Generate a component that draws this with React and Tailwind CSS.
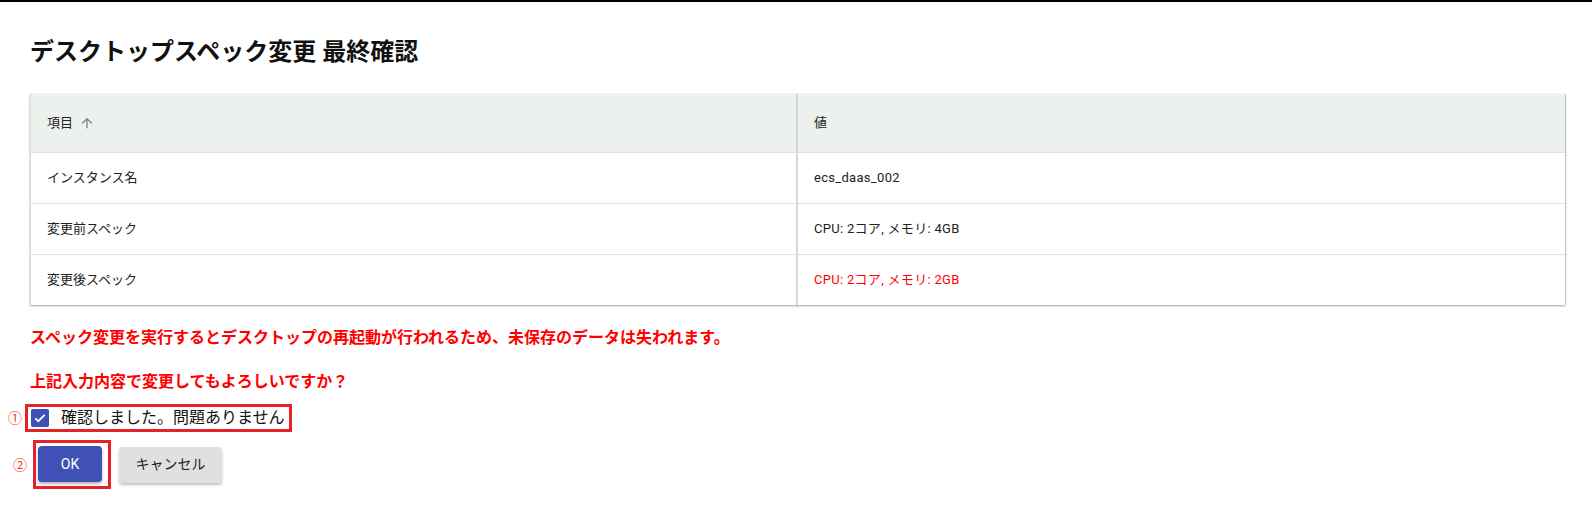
import React from "react";

const font = { fontFamily: 'Roboto, "Noto Sans CJK JP", sans-serif' };

function ArrowUp() {
  return (
    <svg width="16" height="16" viewBox="0 0 24 24" className="ml-[6px]">
      <path d="M4 12l1.41 1.41L11 7.83V20h2V7.83l5.58 5.59L20 12l-8-8-8 8z" fill="#858585" />
    </svg>
  );
}

export default function App() {
  const rows = [
    { k: "インスタンス名", v: "ecs_daas_002", red: false },
    { k: "変更前スペック", v: "CPU: 2コア, メモリ: 4GB", red: false },
    { k: "変更後スペック", v: "CPU: 2コア, メモリ: 2GB", red: true },
  ];
  return (
    <div className="w-[1592px] h-[507px] bg-white border-t-2 border-black overflow-hidden" style={font}>
      <div className="pl-[30px] pr-[27px]">
        <h1 className="mt-[34px] text-[24px] leading-[32px] font-bold text-[#111]">
          デスクトップスペック変更 最終確認
        </h1>
        <div className="mt-[26px] bg-white border-l border-[#d8dcd9] shadow-[0_1px_2px_rgba(0,0,0,0.35),1px_0_1px_rgba(0,0,0,0.15)]">
          <div className="grid grid-cols-[767px_1fr] h-[58px] bg-[#edf1ee] text-[13px] text-[#222]">
            <div className="flex items-center pl-[16px] border-r-2 border-[#d2d8d4]">
              項目
              <ArrowUp />
            </div>
            <div className="flex items-center pl-[16px]">値</div>
          </div>
          {rows.map((r) => (
            <div key={r.k} className="grid grid-cols-[767px_1fr] h-[51px] border-t border-[#e0e0e0] text-[13px] text-[#222]">
              <div className="flex items-center pl-[16px] border-r-2 border-[#d2d8d4]">{r.k}</div>
              <div className={"flex items-center pl-[16px] tracking-[0.3px] " + (r.red ? "text-[#ff0000]" : "")}>{r.v}</div>
            </div>
          ))}
        </div>
        <p className="mt-[22px] text-[16px] leading-[22px] font-bold text-[#ff0000]">
          スペック変更を実行するとデスクトップの再起動が行われるため、未保存のデータは失われます。
        </p>
        <p className="mt-[22px] text-[16px] leading-[22px] font-bold text-[#ff0000]">
          上記入力内容で変更してもよろしいですか？
        </p>
        <div className="mt-[11px] -ml-[22px] flex items-center">
          <span className="w-[17px] text-[14px] leading-[20px] text-[#ff3333]">①</span>
          <label className="flex items-center h-[28px] border-[3px] border-[#e8202a] pl-[3px] pr-[4px]">
            <span className="w-[18px] h-[18px] rounded-[2px] bg-[#3f51b5] flex items-center justify-center">
              <svg width="14" height="14" viewBox="0 0 24 24">
                <path d="M4 12.5l5 5L20 6.5" fill="none" stroke="#fff" strokeWidth="3" />
              </svg>
            </span>
            <span className="ml-[12px] text-[16px] leading-[20px] text-[#111]">確認しました。問題ありません</span>
          </label>
        </div>
        <div className="mt-[8px] -ml-[17px] flex items-center">
          <span className="w-[20px] text-[14px] leading-[20px] text-[#ff3333]">②</span>
          <div className="border-[3px] border-[#e8202a] pl-[2px] pt-[3px] pr-[6px] pb-[4px]">
            <button className="w-[64px] h-[36px] rounded-[4px] bg-[#3f51b5] text-white text-[14px] font-normal shadow-[0_2px_3px_rgba(0,0,0,0.3)]">
              OK
            </button>
          </div>
          <button className="ml-[8px] w-[103px] h-[36px] rounded-[4px] bg-[#e0e0e0] text-[#222] text-[14px] font-normal shadow-[0_2px_3px_rgba(0,0,0,0.25)]">
            キャンセル
          </button>
        </div>
      </div>
    </div>
  );
}
